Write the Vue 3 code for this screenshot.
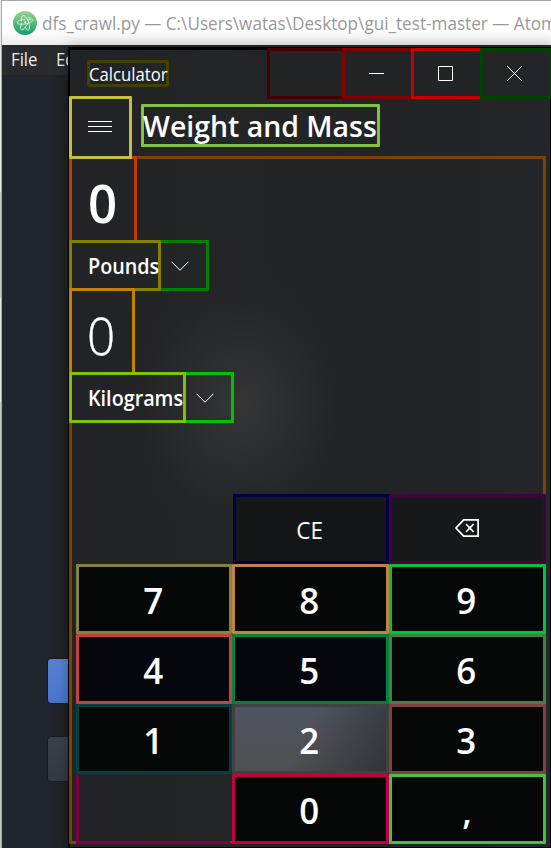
<script setup>
const keys = [
  { t: '', c: 'blank' },
  { t: 'CE', c: 'ce' },
  { t: '', c: 'back', icon: true },
  { t: '7', c: 'k7' }, { t: '8', c: 'k8' }, { t: '9', c: 'k9' },
  { t: '4', c: 'k4' }, { t: '5', c: 'k5' }, { t: '6', c: 'k6' },
  { t: '1', c: 'k1' }, { t: '2', c: 'k2' }, { t: '3', c: 'k3' },
  { t: '', c: 'empty' }, { t: '0', c: 'k0' }, { t: ',', c: 'comma' },
]
</script>

<template>
  <div class="desktop">
    <div class="edge"></div>
    <div class="atom">
      <header class="atom-title">
        <svg class="logo" viewBox="0 0 24 24">
          <defs>
            <linearGradient id="atomg" x1="0" y1="0" x2="0" y2="1">
              <stop offset="0" stop-color="#9bd78a" />
              <stop offset="1" stop-color="#129d6b" />
            </linearGradient>
          </defs>
          <circle cx="12" cy="12" r="12" fill="url(#atomg)" />
          <g fill="none" stroke="#e4f6e8" stroke-width=".9">
            <path d="M12.5 8.6C8 8.6 4 10 4.300 11.700C4.600 13.200 8 13.600 12 13C16.500 12.200 20 10.500 19.700 9.100C19.500 8.200 18 8 16.300 8" />
            <path d="M8.500 10.500C8 7 8.700 4.700 10 4.500C11.800 4.300 14.500 8 15.800 12C17 16 16.800 18.800 15.400 19.100C14.500 19.300 13.200 18.200 12 16.500" />
            <path d="M14.800 7.200C15.800 5.800 16.500 6.200 16.400 7.500C16.200 10 14 14.500 11.500 17.200C9.500 19.300 7.900 19.300 7.600 17.500C7.400 16 8 14 9 12" />
          </g>
          <circle cx="12.200" cy="11.300" r="1" fill="#e4f6e8" />
        </svg>
        <span class="path">dfs_crawl.py — C:\Users\watas\Desktop\gui_test-master — Atom</span>
      </header>
      <nav class="menu"><span>File</span><span>Edit</span></nav>
      <div class="pane">
        <div class="btn blue"></div>
        <div class="btn gray"></div>
      </div>
    </div>

    <section class="calc">
      <div class="titlebar">
        <div class="app-name"><span>Calculator</span></div>
        <div class="controls">
          <div class="ctl c0"></div>
          <div class="ctl c1"><svg width="15" height="15"><path d="M0 7.5H15" /></svg></div>
          <div class="ctl c2"><svg width="15" height="15"><path d="M.5 .5H14.5V14.5H.5Z" /></svg></div>
          <div class="ctl c3"><svg width="15" height="15"><path d="M0 0L15 15M15 0L0 15" /></svg></div>
        </div>
      </div>
      <div class="heading">
        <div class="burger"><svg width="24" height="11"><path d="M0 .5H24M0 5.5H24M0 10.5H24" /></svg></div>
        <div class="mode"><span>Weight and Mass</span></div>
      </div>
      <main class="body">
        <div class="value v1"><span>0</span></div>
        <div class="unit u1">
          <div class="name"><span>Pounds</span></div>
          <div class="drop"><svg width="18" height="10"><path d="M.5 .7L9 9.2L17.5 .7" /></svg></div>
        </div>
        <div class="value v2"><span>0</span></div>
        <div class="unit u2">
          <div class="name"><span>Kilograms</span></div>
          <div class="drop"><svg width="18" height="10"><path d="M.5 .7L9 9.2L17.5 .7" /></svg></div>
        </div>
        <div class="keys">
          <div v-for="k in keys" :key="k.c" class="key" :class="k.c">
            <svg v-if="k.icon" width="24" height="18" viewBox="0 0 24 18">
              <path d="M.9 9L8.7 .8H23.2V17.2H8.7ZM11 5L18.6 13M18.6 5L11 13" />
            </svg>
            <span v-else>{{ k.t }}</span>
          </div>
        </div>
      </main>
    </section>
  </div>
</template>

<style>
body { margin: 0; overflow: hidden; }
</style>

<style scoped>
* { box-sizing: border-box; }
.desktop {
  position: relative; display: flex; width: 551px; height: 848px; overflow: hidden;
  font-family: "Open Sans", "Noto Sans", sans-serif; color: #fff; white-space: nowrap; background: #21252d;
}
svg { display: block; flex: none; }
.edge {
  width: 2px; flex: none; border-right: 1px solid #a9aaab;
  background: linear-gradient(#e9e9e9 0 192px, #c9c9c9 192px 298px, #e4e4e4 298px 402px, #c4c6c6 402px);
}
.atom { flex: 1; min-width: 0; display: flex; flex-direction: column; }
.atom-title {
  height: 45px; flex: none; border-top: 1px solid #a8a8a8; display: flex; align-items: center; gap: 6px;
  padding: 0 0 1px 11px; background: linear-gradient(#fff 65%, #ededed);
}
.logo { width: 24px; height: 24px; }
.path { font-size: 18.5px; color: #999; transform: translateX(-1px) scaleX(.926); transform-origin: 0 50%; }
.menu {
  height: 30px; flex: none; background: #292b2e; display: flex; gap: 16px; padding: 1px 0 0 9px;
  font-size: 18px; line-height: 26px; color: #eee;
}
.menu span { transform: scaleX(.93); transform-origin: 0 50%; }
.pane {
  flex: 1; display: flex; flex-direction: column; gap: 32px; padding: 583px 0 0 45px;
  background: linear-gradient(90deg, #21252d 45px, #1f2124 67px);
}
.btn { width: 60px; height: 46px; border: 1px solid #191b20; border-radius: 4px; }
.blue { background: linear-gradient(#5681d5, #4a75cb); }
.gray { background: linear-gradient(#3c404b, #343841); }

.calc {
  position: absolute; left: 68px; top: 47px; width: 483px; height: 801px;
  display: flex; flex-direction: column;
  border: solid #000; border-width: 3px 1px 1px 2px;
  background: radial-gradient(ellipse 130px 150px at 170px 355px, rgba(53, 54, 55, .95), rgba(46, 47, 48, .6) 45%, rgba(38, 39, 41, .2) 75%, rgba(36, 37, 39, 0)),
    linear-gradient(90deg, #222326, #242527 30%, #222325 70%, #25262b);
  box-shadow: 0 0 12px rgba(0, 0, 0, .3);
}
.titlebar { display: flex; justify-content: space-between; align-items: flex-start; height: 46px; flex: none; }
.app-name {
  margin: 10px 0 0 17px; width: 82px; height: 27px; border: 3px solid #424100; border-radius: 2px;
  font-size: 17.5px; line-height: 23px;
}
.app-name span { display: inline-block; transform: translate(-1px, -.5px) scaleX(.955); transform-origin: 0 50%; }
.controls { display: flex; margin: -2px -2px 0 0; }
.ctl { width: 72px; height: 51px; margin-left: -3px; border: 3px solid; border-radius: 1px; display: flex; align-items: center; justify-content: center; padding-right: 3px; }
.ctl svg, .burger svg, .drop svg { fill: none; stroke: #fff; stroke-width: 1; }
.c0 { width: 78px; border-color: #450001; }
.c1 { border-color: #820001; }
.c2 { border-color: #c80003; }
.c3 { border-color: #004200; }
.heading { display: flex; height: 60px; flex: none; align-items: flex-start; position: relative; z-index: 2; }
.burger {
  width: 63px; height: 63px; flex: none; margin-left: -1px; border: 3px solid #c3c13c; border-radius: 1px;
  display: flex; align-items: center; justify-content: center; padding-bottom: 2px; padding-right: 1px;
}
.mode {
  width: 239px; height: 43px; margin: 8px 0 0 9px; border: 3px solid #82c341; border-radius: 1px;
  font-size: 28.5px; font-weight: 600; line-height: 38px;
}
.mode span { display: inline-block; transform: translate(-1px, 0) scaleX(.998); transform-origin: 0 50%; }
.body {
  width: 477px; height: 688px; flex: none; margin-left: -1px; border: 3px solid #7f4200; border-radius: 1px;
  display: flex; flex-direction: column; align-items: flex-start;
}
.value { height: 87px; flex: none; margin: -3px 0 0 -3px; border: 3px solid; border-radius: 1px; display: flex; align-items: center; line-height: 60px; }
.v1 { width: 68px; border-color: #c43c00; font-weight: 600; font-size: 52px; padding: 6px 0 0 15px; }
.v2 { width: 66px; border-color: #c48200; font-weight: 300; font-size: 51px; padding: 6px 0 0 15px; position: relative; z-index: 1; }
.value span { display: inline-block; transform-origin: 0 50%; }
.v1 span { transform: translateX(1px) scaleX(.98); }
.v2 span { transform: scaleX(.97); -webkit-text-stroke: .4px #fff; }
.unit { display: flex; flex: none; margin: -3px 0 0 -3px; position: relative; }
.name, .drop { height: 51px; border: 3px solid; border-radius: 1px; display: flex; align-items: center; }
.name { position: relative; z-index: 1; padding-left: 16px; font-size: 20.8px; font-weight: 600; }
.name span { transform-origin: 0 50%; transform: scaleX(.95); }
.drop { margin-left: -3px; justify-content: center; padding-top: 1px; }
.u1 .name { width: 92px; border-color: #828200; }
.u1 .drop { width: 51px; border-color: #008200; padding-right: 7px; }
.u2 { z-index: 2; }
.u2 .name { width: 117px; border-color: #82c300; }
.u2 .drop { width: 51px; border-color: #00c300; padding-right: 7px; }
.keys {
  margin: 71px 0 0 4px; display: grid; grid-template-columns: 156px 157px 157px; grid-auto-rows: 70px; flex: none;
}
.key {
  border: 3px solid; border-radius: 1px; background: #060707; display: flex; align-items: center; justify-content: center;
  font-size: 36px; font-weight: 600; padding: 4px 2px 0 0; line-height: 50px;
}
.key span { transform: scaleX(.97); }
.blank { border-color: transparent; background: none; }
.ce { border-color: #000042; background: #151617; font-size: 23px; font-weight: 400; margin-left: 1px; padding-top: 2px; }
.ce span { transform: scaleX(.98); }
.back { border-color: #420042; background: #17181a; padding: 0 1px 2px 0; }
.back svg { fill: none; stroke: #fff; stroke-width: 1.8; }
.k7 { border-color: #828241; }
.k8 { border-color: #c3823f; }
.k9 { border-color: #00c341; }
.k4 { border-color: #c34141; background: #06070c; }
.k5 { border-color: #008241; background: #06070c; }
.k6 { border-color: #418241; }
.k1 { border-color: #004141; }
.k2 { border-color: #414141; background: linear-gradient(115deg, transparent 45%, rgba(40, 42, 48, .75)), linear-gradient(#50545f, #4f5052); }
.k3 { border-color: #824141; }
.empty { border-color: #820041; border-top-color: transparent; border-right-color: transparent; background: none; }
.k0 { border-color: #c30041; }
.comma { border-color: #41c341; }
</style>
